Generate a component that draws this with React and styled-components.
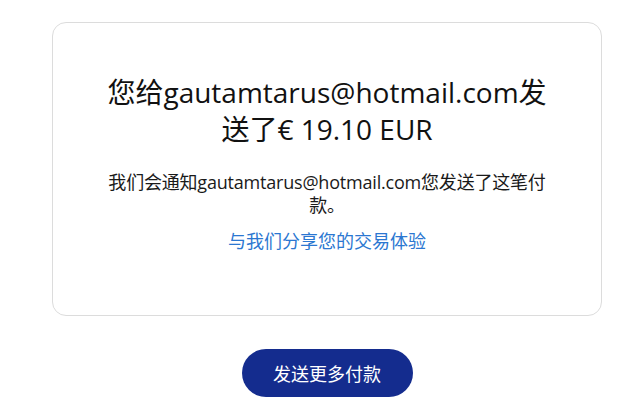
import React from "react";
import styled, { createGlobalStyle } from "styled-components";

const GlobalStyle = createGlobalStyle`
  body {
    margin: 0;
    background: #ffffff;
    font-family: "Open Sans", "Noto Sans CJK SC", sans-serif;
    color: #1a1a1a;
  }
`;

const Page = styled.div`
  width: 550px;
  padding: 22px 0 0 52px;
  display: flex;
  flex-direction: column;
  align-items: center;
`;

const Card = styled.div`
  box-sizing: border-box;
  width: 550px;
  height: 294px;
  border: 1px solid #dcdcdc;
  border-radius: 14px;
  padding: 51px 50px 0;
  display: flex;
  flex-direction: column;
  align-items: center;
  text-align: center;
`;

const Title = styled.h1`
  margin: 0;
  font-size: 28px;
  line-height: 37px;
  font-weight: 400;
  color: #111;
`;

const Message = styled.p`
  margin: 23px 0 0;
  font-size: 18px;
  line-height: 23px;
  letter-spacing: -0.2px;
  color: #1a1a1a;
`;

const ShareLink = styled.a`
  margin-top: 13px;
  font-size: 18px;
  line-height: 23px;
  color: #2b77d1;
  text-decoration: none;
`;

const Button = styled.button`
  margin-top: 33px;
  width: 171px;
  height: 48px;
  border: none;
  border-radius: 24px;
  background: #142c8e;
  color: #fff;
  font-family: "Open Sans", "Noto Sans CJK SC", sans-serif;
  font-size: 18px;
  cursor: pointer;
`;

export default function App() {
  return (
    <>
      <GlobalStyle />
      <Page>
        <Card>
          <Title>您给gautamtarus@hotmail.com发送了€ 19.10 EUR</Title>
          <Message>我们会通知gautamtarus@hotmail.com您发送了这笔付款。</Message>
          <ShareLink href="#">与我们分享您的交易体验</ShareLink>
        </Card>
        <Button>发送更多付款</Button>
      </Page>
    </>
  );
}
